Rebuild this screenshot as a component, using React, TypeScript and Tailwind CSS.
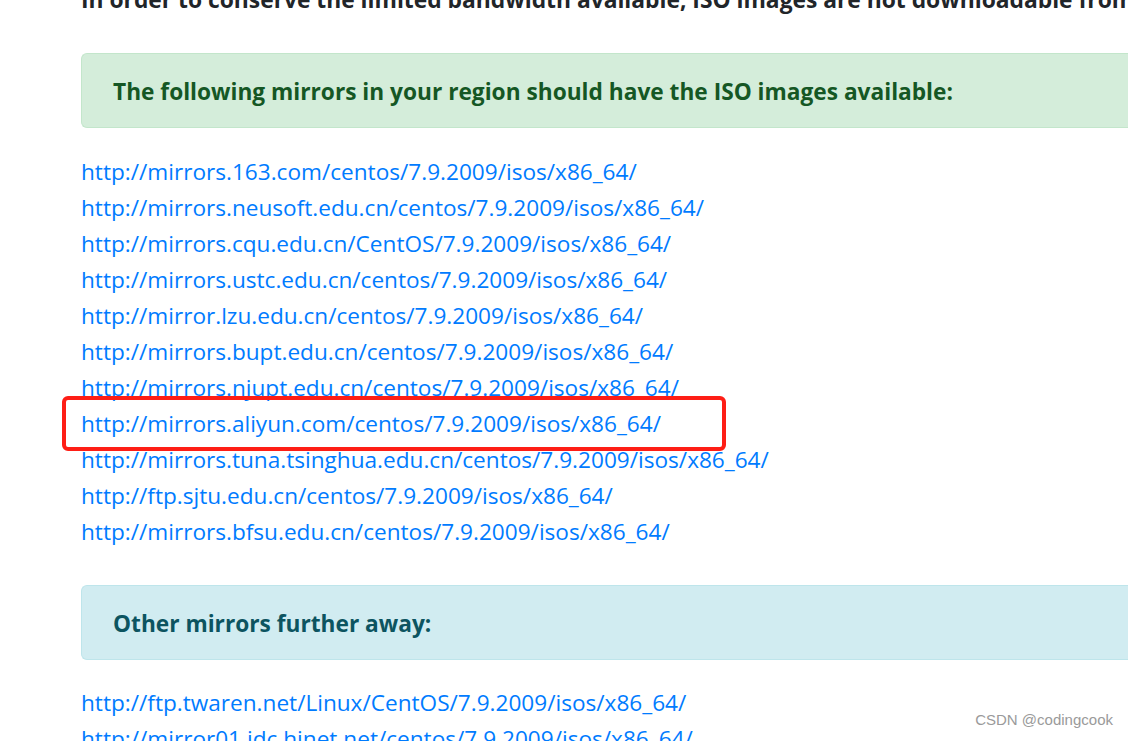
const nearMirrors = [
  "http://mirrors.163.com/centos/7.9.2009/isos/x86_64/",
  "http://mirrors.neusoft.edu.cn/centos/7.9.2009/isos/x86_64/",
  "http://mirrors.cqu.edu.cn/CentOS/7.9.2009/isos/x86_64/",
  "http://mirrors.ustc.edu.cn/centos/7.9.2009/isos/x86_64/",
  "http://mirror.lzu.edu.cn/centos/7.9.2009/isos/x86_64/",
  "http://mirrors.bupt.edu.cn/centos/7.9.2009/isos/x86_64/",
  "http://mirrors.njupt.edu.cn/centos/7.9.2009/isos/x86_64/",
  "http://mirrors.aliyun.com/centos/7.9.2009/isos/x86_64/",
  "http://mirrors.tuna.tsinghua.edu.cn/centos/7.9.2009/isos/x86_64/",
  "http://ftp.sjtu.edu.cn/centos/7.9.2009/isos/x86_64/",
  "http://mirrors.bfsu.edu.cn/centos/7.9.2009/isos/x86_64/",
];

const farMirrors = [
  "http://ftp.twaren.net/Linux/CentOS/7.9.2009/isos/x86_64/",
  "http://mirror01.idc.hinet.net/centos/7.9.2009/isos/x86_64/",
];

const MirrorLink = ({ url, marked }: { url: string; marked?: boolean }) => (
  <div className="relative h-[36px] leading-[36px]">
    <a href="#" className="text-[#007bff] whitespace-nowrap">
      {url}
    </a>
    {marked && (
      <div className="absolute left-[-19px] top-[-10px] w-[664px] h-[55px] border-[4.5px] border-[#fe1e16] rounded-[6px]" />
    )}
  </div>
);

const App = () => {
  return (
    <div
      className="relative h-[741px] w-[1128px] overflow-hidden bg-white text-[#212529] text-[22.6px]"
      style={{ fontFamily: '"Open Sans", "Noto Sans", sans-serif' }}
    >
      <div className="pl-[81px]">
        <p className="mt-[-18px] h-[36px] leading-[36px] font-bold text-[22.8px] whitespace-nowrap">
          In order to conserve the limited bandwidth available, ISO images are not downloadable from mirror.centos.org
        </p>

        <div className="mt-[35px] h-[75px] flex items-center pl-[31px] pt-[3px] bg-[#d4edda] border border-r-0 border-[#c3e6cb] rounded-l-[6px] text-[#155724]">
          <h4 className="font-bold text-[22.7px]">The following mirrors in your region should have the ISO images available:</h4>
        </div>

        <div className="mt-[26px]">
          {nearMirrors.map((url) => (
            <MirrorLink key={url} url={url} marked={url.includes("aliyun")} />
          ))}
        </div>

        <div className="mt-[35px] h-[75px] flex items-center pl-[31px] pt-[3px] bg-[#d1ecf1] border border-r-0 border-[#bee5eb] rounded-l-[6px] text-[#0c5460]">
          <h4 className="font-bold text-[22.7px]">Other mirrors further away:</h4>
        </div>

        <div className="mt-[25px]">
          {farMirrors.map((url) => (
            <MirrorLink key={url} url={url} />
          ))}
        </div>
      </div>

      <div
        className="absolute right-[15px] bottom-[10px] text-[15px] text-[#9a9a9a]"
        style={{ fontFamily: '"Liberation Sans", sans-serif' }}
      >
        CSDN @codingcook
      </div>
    </div>
  );
};

export default App;
